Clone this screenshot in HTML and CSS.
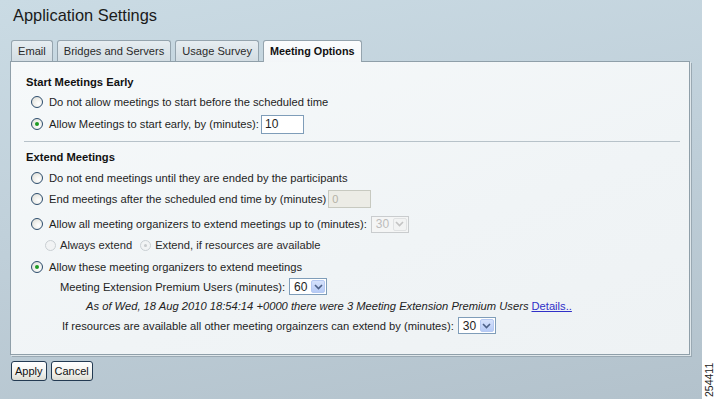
FILE: index.html
```html
<html>
<head>
    <link rel="stylesheet" href="styles.css">
</head>
<body>
    <div class="page">
        <main class="screen">
            <h1 class="title">Application Settings</h1>

            <div class="tabs">
                <div class="tab">Email</div>
                <div class="tab">Bridges and Servers</div>
                <div class="tab">Usage Survey</div>
                <div class="tab tab-active">Meeting Options</div>
            </div>

            <div class="panel">
                <h2 class="section-title">Start Meetings Early</h2>
                <div class="row row-first">
                    <span class="radio"></span>
                    <span>Do not allow meetings to start before the scheduled time</span>
                </div>
                <div class="row row-first">
                    <span class="radio radio-on"></span>
                    <span>Allow Meetings to start early, by (minutes):</span>
                    <span class="field">10</span>
                </div>

                <div class="separator"></div>

                <h2 class="section-title">Extend Meetings</h2>
                <div class="row row-a">
                    <span class="radio"></span>
                    <span>Do not end meetings until they are ended by the participants</span>
                </div>
                <div class="row row-b">
                    <span class="radio"></span>
                    <span>End meetings after the scheduled end time by (minutes)</span>
                    <span class="field field-off">0</span>
                </div>
                <div class="row row-c">
                    <span class="radio"></span>
                    <span>Allow all meeting organizers to extend meetings up to (minutes):</span>
                    <span class="select select-off">
                        <span class="select-value">30</span>
                        <span class="select-btn">
                            <svg width="9" height="6" viewBox="0 0 9 6"><path d="M1 1 L4.5 4.5 L8 1" fill="none" stroke="#c3c3c3" stroke-width="1.6"/></svg>
                        </span>
                    </span>
                </div>
                <div class="row row-sub">
                    <span class="radio radio-small radio-off"></span>
                    <span class="muted">Always extend</span>
                    <span class="radio radio-small radio-off radio-dot-off"></span>
                    <span class="muted">Extend, if resources are available</span>
                </div>
                <div class="row row-e">
                    <span class="radio radio-on"></span>
                    <span>Allow these meeting organizers to extend meetings</span>
                </div>
                <div class="row row-tight indent-1">
                    <span>Meeting Extension Premium Users (minutes):</span>
                    <span class="select">
                        <span class="select-value">60</span>
                        <span class="select-btn">
                            <svg width="9" height="6" viewBox="0 0 9 6"><path d="M1 1 L4.5 4.5 L8 1" fill="none" stroke="#4d6187" stroke-width="1.6"/></svg>
                        </span>
                    </span>
                </div>
                <div class="row row-tight indent-2">
                    <span class="note">As of Wed, 18 Aug 2010 18:54:14 +0000 there were 3 Meeting Extension Premium Users</span>
                    <a class="link" href="#">Details..</a>
                </div>
                <div class="row row-tight indent-3">
                    <span>If resources are available all other meeting orgainzers can extend by (minutes):</span>
                    <span class="select">
                        <span class="select-value">30</span>
                        <span class="select-btn">
                            <svg width="9" height="6" viewBox="0 0 9 6"><path d="M1 1 L4.5 4.5 L8 1" fill="none" stroke="#4d6187" stroke-width="1.6"/></svg>
                        </span>
                    </span>
                </div>
            </div>

            <div class="actions">
                <button class="btn">Apply</button>
                <button class="btn">Cancel</button>
            </div>
        </main>
        <aside class="fig-id">254411</aside>
    </div>
</body>
</html>
```

FILE: styles.css
```css
:root {
    --def-fg: #1e1e1e;
    --def-fn: "Liberation Sans", Arial, sans-serif;
    --panel-line: #8f9fa9;
}

* {
    box-sizing: border-box;
    margin: 0px;
    padding: 0px;
}

body {
    font-family: var(--def-fn);
    font-size: 11.2px;
    color: var(--def-fg);
    background-color: #fff;
}

.page {
    display: flex;
    width: 716px;
    height: 399px;
}

.screen {
    width: 702px;
    height: 399px;
    padding: 5px 0 0 10px;
    background: linear-gradient(170deg, #cadbe4 0%, #c0d0da 45%, #b3c2cc 100%);
}

.title {
    margin-left: 3px;
    font-size: 16.4px;
    font-weight: normal;
    line-height: 20px;
    color: #1a1a1a;
}

/* tabs */

.tabs {
    display: flex;
    align-items: flex-start;
    gap: 4px;
    margin-top: 15px;
    margin-left: 1px;
    margin-bottom: -1px;
    position: relative;
    z-index: 1;
}

.tab {
    height: 21px;
    line-height: 20px;
    padding: 0 6px;
    border: 1px solid #95a4ae;
    border-bottom: none;
    border-radius: 3px 3px 0 0;
    background: linear-gradient(#e6edf1, #d3dde3);
    font-size: 11.1px;
    color: #2a2a2a;
}

.tab-active {
    height: 22px;
    padding: 0 6px;
    background: linear-gradient(#fbfcfd, #f3f6f8);
    font-size: 10.8px;
    font-weight: bold;
    color: #111;
}

/* panel */

.panel {
    width: 680px;
    height: 294px;
    padding: 12px 9px 0 15px;
    border: 1px solid var(--panel-line);
    background: linear-gradient(160deg, #f6f9fa 0%, #f0f4f6 60%, #eef2f4 100%);
    box-shadow: 1px 1px 0 #dfe7eb, 2px 2px 0 #9aa9b3;
}

.section-title {
    height: 16px;
    line-height: 16px;
    font-size: 11.2px;
    font-weight: bold;
    color: #111;
}

.separator {
    margin: 7px 0 7px -2px;
    border-top: 1px solid #b7c2c9;
}

.row {
    display: flex;
    align-items: center;
    height: 20px;
    padding-left: 5px;
    white-space: nowrap;
}

.row-first { margin-top: 2px; }
.row-a { margin-top: 3px; }
.row-b { margin-top: 1px; }
.row-c { margin-top: 5px; }
.row-sub { margin-top: 1px; padding-left: 19px; }
.row-e { margin-top: 2px; }

.row-tight {
    height: 19px;
}

.indent-1 { padding-left: 34px; }
.indent-2 { padding-left: 60px; }
.indent-3 { padding-left: 36px; margin-top: 1px; }

/* radios */

.radio {
    width: 12px;
    height: 12px;
    margin-right: 6px;
    border: 1px solid #2c4c6c;
    border-radius: 50%;
    background: radial-gradient(circle at 65% 65%, #ffffff 0%, #f0f0ec 45%, #d8d8d2 100%);
    flex: none;
    position: relative;
}

.radio-on::after {
    content: "";
    position: absolute;
    left: 3px;
    top: 3px;
    width: 4px;
    height: 4px;
    border-radius: 50%;
    background: #1d9a22;
}

.radio-small {
    width: 11px;
    height: 11px;
    margin-right: 4px;
}

.radio-off {
    border-color: #c9cfd3;
    background: #f1f3f4;
}

.radio-dot-off {
    margin-left: 8px;
}

.radio-dot-off::after {
    content: "";
    position: absolute;
    left: 3px;
    top: 3px;
    width: 3px;
    height: 3px;
    border-radius: 50%;
    background: #c6cacc;
}

.muted {
    color: #2a2a2a;
}

/* fields */

.field {
    width: 43px;
    height: 19px;
    margin-left: 2px;
    padding-left: 3px;
    line-height: 17px;
    border: 1px solid #7f9db9;
    background-color: #fff;
    font-size: 12px;
}

.field-off {
    height: 18px;
    line-height: 16px;
    background-color: #ecece6;
    border-color: #c7c9c0;
    color: #b4b2a6;
    font-size: 11px;
}

.select {
    display: flex;
    align-items: center;
    height: 17px;
    margin-left: 4px;
    padding: 1px;
    border: 1px solid #7f9db9;
    background-color: #fff;
}

.select-value {
    width: 20px;
    padding-left: 3px;
    font-size: 12px;
}

.select-btn {
    display: flex;
    align-items: center;
    justify-content: center;
    width: 14px;
    height: 13px;
    border: 1px solid #b6c9f2;
    border-radius: 2px;
    background: linear-gradient(#d6e2fc, #b7cbf6);
}

.select-off {
    border-color: #c9ccce;
    background-color: #f4f5f5;
    color: #bcbcbc;
}

.select-off .select-btn {
    border-color: #e0e2e3;
    background: #f2f3f3;
}

.note {
    font-style: italic;
    color: #222;
}

.link {
    margin-left: 3px;
    color: #3030c8;
}

/* buttons */

.actions {
    display: flex;
    gap: 4px;
    margin-top: 6px;
    margin-left: 1px;
}

.btn {
    height: 20px;
    padding: 0 3px;
    border: 1px solid #233a52;
    border-radius: 3px;
    background: linear-gradient(#ffffff, #f2f2ee 60%, #dcdcd4);
    font-family: var(--def-fn);
    font-size: 11px;
    color: #111;
}

/* figure id on the right edge */

.fig-id {
    width: 14px;
    display: flex;
    writing-mode: vertical-rl;
    transform: rotate(180deg);
    justify-content: flex-start;
    align-items: center;
    padding-top: 2px;
    font-size: 10.5px;
    color: #222;
}
```
